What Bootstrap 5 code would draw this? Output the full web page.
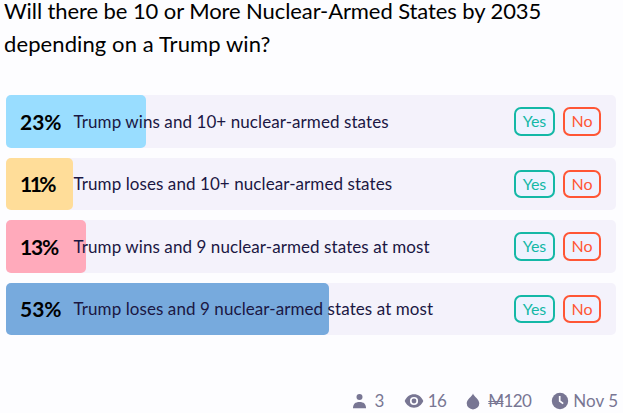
<!DOCTYPE html>
<html lang="en">
<head>
    <meta charset="UTF-8">
    <meta name="viewport" content="width=device-width, initial-scale=1">
    <title>Nuclear-Armed States by 2035</title>
    <link href="https://cdn.jsdelivr.net/npm/bootstrap@5.3.3/dist/css/bootstrap.min.css" rel="stylesheet">
    <style>
        body {
            background: #fdfdff;
            font-family: Lato, "Liberation Sans", sans-serif;
            color: #000;
        }
        .question {
            font-size: 22px;
            line-height: 21px;
            letter-spacing: -.09px;
            padding-left: 4px;
            margin: 0 0 41px;
            font-weight: 400;
        }
        .question-end {
            margin-top: 12px;
            letter-spacing: .1px;
        }
        .answers {
            gap: 10px;
            padding: 0 7px 0 6px;
        }
        .answer {
            height: 52.5px;
            border-radius: 5px;
            background: #f4f2fb;
            padding: 0 15px 0 14px;
        }
        .answer-fill {
            border-radius: 5px;
        }
        .fill-sky { background: #99ddff; }
        .fill-sand { background: #ffdd99; }
        .fill-pink { background: #ffaabb; }
        .fill-blue { background: #77aadd; }
        .percent {
            width: 53.5px;
            font-size: 21px;
            font-weight: 700;
        }
        .percent-11 { letter-spacing: -2.5px; }
        .percent-13 { letter-spacing: -1.2px; }
        .answer-text {
            font-size: 17px;
            letter-spacing: .08px;
            color: #1b1743;
        }
        .btn-bet {
            height: 28.5px;
            padding: 0;
            border: 2px solid;
            border-radius: 7px;
            background: #eef2ff;
            font-size: 16px;
            line-height: 24px;
        }
        .btn-yes { width: 41px; color: #14b8a6; border-color: #14b8a6; }
        .btn-no { width: 38px; color: #ff5635; border-color: #ff5635; }
        .stats {
            gap: 20px;
            margin-top: 54px;
            padding-right: 5px;
            font-size: 17px;
            line-height: 24px;
            color: #787693;
        }
        .count { letter-spacing: -.6px; }
        .mana {
            text-decoration: line-through double;
            text-decoration-thickness: 1px;
        }
    </style>
</head>
<body class="overflow-hidden">
<h1 class="question">
    <span class="d-block">Will there be 10 or More Nuclear-Armed States by 2035</span>
    <span class="question-end d-block">depending on a Trump win?</span>
</h1>
<div class="answers d-flex flex-column">
    <div class="answer position-relative d-flex align-items-center">
        <div class="answer-fill fill-sky position-absolute top-0 start-0 h-100" style="width: 23%"></div>
        <span class="percent position-relative">23%</span>
        <span class="answer-text position-relative">Trump wins and 10+ nuclear-armed states</span>
        <div class="d-flex gap-2 ms-auto">
            <button class="btn btn-bet btn-yes">Yes</button>
            <button class="btn btn-bet btn-no">No</button>
        </div>
    </div>
    <div class="answer position-relative d-flex align-items-center">
        <div class="answer-fill fill-sand position-absolute top-0 start-0 h-100" style="width: 11%"></div>
        <span class="percent percent-11 position-relative">11%</span>
        <span class="answer-text position-relative">Trump loses and 10+ nuclear-armed states</span>
        <div class="d-flex gap-2 ms-auto">
            <button class="btn btn-bet btn-yes">Yes</button>
            <button class="btn btn-bet btn-no">No</button>
        </div>
    </div>
    <div class="answer position-relative d-flex align-items-center">
        <div class="answer-fill fill-pink position-absolute top-0 start-0 h-100" style="width: 13.1%"></div>
        <span class="percent percent-13 position-relative">13%</span>
        <span class="answer-text position-relative">Trump wins and 9 nuclear-armed states at most</span>
        <div class="d-flex gap-2 ms-auto">
            <button class="btn btn-bet btn-yes">Yes</button>
            <button class="btn btn-bet btn-no">No</button>
        </div>
    </div>
    <div class="answer position-relative d-flex align-items-center">
        <div class="answer-fill fill-blue position-absolute top-0 start-0 h-100" style="width: 53%"></div>
        <span class="percent position-relative">53%</span>
        <span class="answer-text position-relative">Trump loses and 9 nuclear-armed states at most</span>
        <div class="d-flex gap-2 ms-auto">
            <button class="btn btn-bet btn-yes">Yes</button>
            <button class="btn btn-bet btn-no">No</button>
        </div>
    </div>
</div>
<div class="stats d-flex justify-content-end">
    <span class="d-flex align-items-center gap-2">
        <svg width="15" height="16" viewBox="0 0 15 16" fill="currentColor"><circle cx="7.5" cy="4" r="3"/><path d="M1 15.2C1 11 3.2 9 7.5 9S14 11 14 15.2z"/></svg>
        <span class="count">3</span>
    </span>
    <span class="d-flex align-items-center gap-1">
        <svg width="20" height="16" viewBox="0 0 20 16" fill="currentColor" fill-rule="evenodd"><path d="M.7 8C2.5 4 5.8 1.3 10 1.3S17.5 4 19.3 8c-1.8 4-5.1 6.7-9.3 6.7S2.5 12 .7 8zM10 3.9a4.1 4.1 0 1 0 0 8.2a4.1 4.1 0 0 0 0-8.2z"/><circle cx="10" cy="8" r="2.4"/></svg>
        <span class="count">16</span>
    </span>
    <span class="d-flex align-items-center gap-2">
        <svg width="14" height="17" viewBox="0 0 14 17" fill="currentColor"><path d="M7 .5C6 3.5 .7 6.5 .7 10.3a6.3 6.1 0 0 0 12.6 0C13.3 6.5 8 3.5 7 .5z"/></svg>
        <span class="count"><span class="mana">M</span>120</span>
    </span>
    <span class="d-flex align-items-center gap-1">
        <svg width="18" height="18" viewBox="0 0 18 18"><circle cx="9" cy="9" r="8.2" fill="currentColor"/><path d="M8.7 4v5l3.5 2.6" fill="none" stroke="#fdfdff" stroke-width="1.7"/></svg>
        <span>Nov 5</span>
    </span>
</div>
<script src="https://cdn.jsdelivr.net/npm/bootstrap@5.3.3/dist/js/bootstrap.bundle.min.js"></script>
</body>
</html>
